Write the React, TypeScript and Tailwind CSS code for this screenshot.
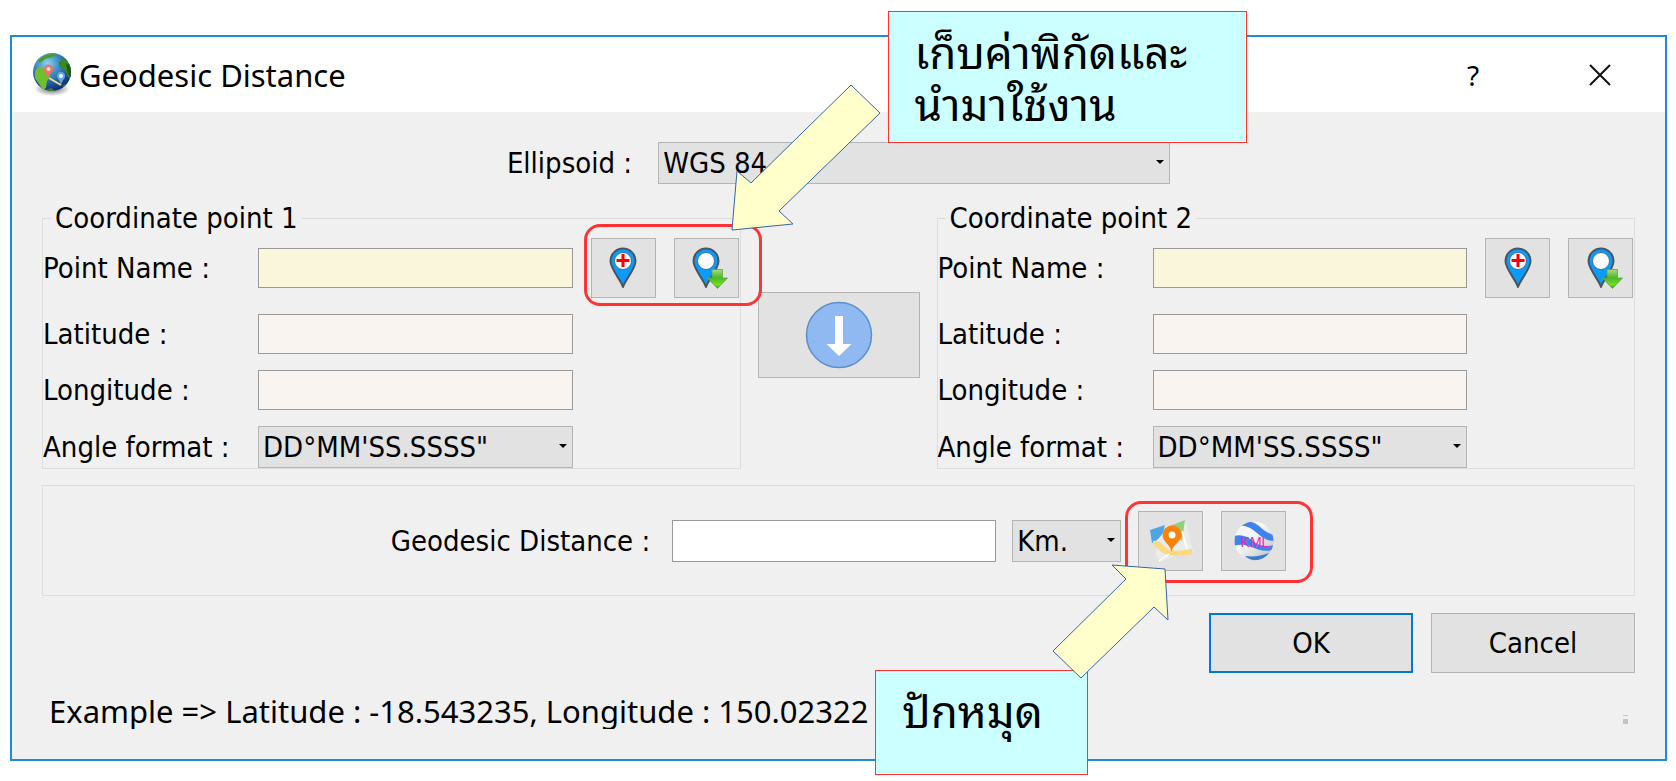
import type { ReactNode } from 'react'
import { clsx } from 'clsx'

const labelFont = 'font-["DejaVu_Sans_Condensed","Noto_Sans",sans-serif]'
const titleFont = 'font-["Noto_Sans","Open_Sans",sans-serif]'

function GlobeIcon() {
    return (
        <svg className="h-[46px] w-[42px]" viewBox="0 0 42 46" aria-hidden="true">
            <defs>
                <radialGradient id="sea" cx="0.38" cy="0.28" r="0.75">
                    <stop offset="0" stopColor="#8fd3ef" />
                    <stop offset="0.4" stopColor="#3f8fc4" />
                    <stop offset="1" stopColor="#0a2a72" />
                </radialGradient>
                <radialGradient id="shadow">
                    <stop offset="0" stopColor="#000" stopOpacity="0.6" />
                    <stop offset="1" stopColor="#000" stopOpacity="0" />
                </radialGradient>
                <clipPath id="globe">
                    <circle cx="21" cy="20" r="19" />
                </clipPath>
            </defs>
            <ellipse cx="21" cy="37" rx="18" ry="7" fill="url(#shadow)" />
            <circle cx="21" cy="20" r="19" fill="url(#sea)" />
            <g clipPath="url(#globe)">
                <path d="M4 20C6 14 10 14 13 16l5 3 1 5-3 5-1 7-3 2-4-6-4-6z" fill="#6fbf2e" />
                <path d="M7 9C13 2 20 1 26 3l-5 2-7 2-5 4z" fill="#4c9a2c" />
                <path d="M28 10l4-4 9 8v14l-4-3-3-7-6-4z" fill="#3a8a1c" />
                <path d="M35 11l6 4v13l-4-6z" fill="#1f5a14" />
                <path d="M15 38l5-2 4 3-6 1zM31 34l4-2-1 4z" fill="#3a8a1c" />
            </g>
            <path d="M18 26l12 7" stroke="#f1dc8a" strokeWidth="2" />
            <path d="M17 26c-1-4-4-5-4-9a4.500 4.500 0 0 1 9 0c0 4-4 5-5 9z" fill="#f0716c" />
            <circle cx="17.500" cy="17" r="2" fill="#fbdcd8" />
            <path d="M30 33c-1-5-4-6-4-9a4 4 0 0 1 8 0c0 3-3 4-4 9z" fill="#6aa5dc" />
            <circle cx="30" cy="24" r="2" fill="#e8f4ff" />
        </svg>
    )
}

function PinShape() {
    return (
        <>
            <path
                d="M14 40C12 33 1.500 22 1.500 14a12.500 12.500 0 0 1 25 0C26.500 22 16 33 14 40z"
                fill="#0a9bff"
                stroke="#4a5560"
                strokeWidth="2"
                strokeLinejoin="round"
            />
            <circle cx="14" cy="14" r="8.500" fill="#fff" stroke="#3d6f9c" strokeWidth="1" />
        </>
    )
}

function PinAddIcon() {
    return (
        <svg className="h-[42px] w-7" viewBox="0 0 28 42" aria-hidden="true">
            <PinShape />
            <path d="M14 7v13M7.500 13.500h13" stroke="#f00" strokeWidth="3" />
        </svg>
    )
}

function PinLoadIcon() {
    return (
        <svg className="h-[42px] w-7 overflow-visible" viewBox="0 0 28 42" aria-hidden="true">
            <defs>
                <linearGradient id="leaf" x1="0" y1="0" x2="0" y2="1">
                    <stop offset="0" stopColor="#a2dc80" />
                    <stop offset="0.45" stopColor="#4fb526" />
                    <stop offset="0.8" stopColor="#6fe02c" />
                    <stop offset="1" stopColor="#3f9a1c" />
                </linearGradient>
            </defs>
            <PinShape />
            <path d="M20 22.500h10.500V31h5L25.500 41.500 15.500 31H20z" fill="url(#leaf)" stroke="#5aa83a" strokeWidth="0.8" />
        </svg>
    )
}

function CopyDownIcon() {
    return (
        <svg className="h-[68px] w-[68px]" viewBox="0 0 68 68" aria-hidden="true">
            <circle cx="34" cy="34" r="32.500" fill="#8fb9f0" stroke="#5c8fc9" strokeWidth="1.500" />
            <path d="M30 15h8v28h8.500L34 55 21.500 43H30z" fill="#fff" />
        </svg>
    )
}

function MapIcon() {
    return (
        <svg className="h-11 w-11" viewBox="0 0 44 44" aria-hidden="true">
            <path d="M1 11l14-5 5 2 17-6 7 31-13 2-20 8-5-8 3-9-5-5z" fill="#e9eceb" />
            <path d="M1 11l15-5-2 8-6 8-5 2z" fill="#4ea6e6" />
            <path d="M21 7l15-6-3 21-9-9z" fill="#8fd07a" />
            <path d="M4 22c4-2 8 2 12 6 8 6 17 3 27 2v5c-12 2-22 3-29-1-5-3-6-7-10-7z" fill="#fbd97e" />
            <path d="M10 42l10-7M33 12l5 18M8 22l9-8" stroke="#fff" strokeWidth="1.500" />
            <path d="M22.500 33c-1-8-9-10-9-17a9.500 9.500 0 0 1 19 0c0 7-9 9-10 17z" fill="#f9820b" />
            <circle cx="23" cy="16" r="3.500" fill="#fff" />
        </svg>
    )
}

function KmlIcon() {
    return (
        <svg className="h-[42px] w-[42px]" viewBox="0 0 42 42" aria-hidden="true">
            <defs>
                <clipPath id="kml">
                    <circle cx="21" cy="21" r="19.500" />
                </clipPath>
                <linearGradient id="ball" x1="0" y1="0" x2="1" y2="1">
                    <stop offset="0.4" stopColor="#f7f7f7" />
                    <stop offset="1" stopColor="#bcbcbc" />
                </linearGradient>
            </defs>
            <circle cx="21" cy="21" r="19.500" fill="url(#ball)" />
            <g clipPath="url(#kml)" fill="#3f83ee">
                <path d="M6 6C12 0 20 1 26 6c6 5 9 8 16 9v6c-8 0-12-3-18-8S13 5 6 6z" />
                <path d="M0 16c9-2 14 0 20 5s13 6 22 4l-3 5c-7 2-13 0-18-2s-12-5-21-2z" />
                <path d="M12 36c9 1 16 0 24-3-5 8-16 10-24 3z" fill="#3a7ccd" />
            </g>
            <text x="22" y="27" textAnchor="middle" fill="#e62bb4" className='font-["Liberation_Sans",sans-serif] text-[14px]'>
                KML
            </text>
        </svg>
    )
}

type ButtonProps = { label: string; className?: string; children: ReactNode }

function ToolButton({ label, className, children }: ButtonProps) {
    return (
        <button
            type="button"
            aria-label={label}
            className={clsx('flex items-center justify-center border border-[#b4b4b4] bg-[#e2e2e2]', className)}
        >
            {children}
        </button>
    )
}

type SelectProps = { id: string; value: string; className?: string; label?: string }

function Select({ id, value, className, label }: SelectProps) {
    return (
        <div className={clsx('relative h-[42px]', className)}>
            <select
                id={id}
                aria-label={label}
                className="h-full w-full appearance-none border border-[#b4b4b4] bg-[#e2e2e2] pl-1 leading-9"
            >
                <option>{value}</option>
            </select>
            <svg className="pointer-events-none absolute top-[18px] right-1.5 h-1 w-2" viewBox="0 0 8 4" aria-hidden="true">
                <path d="M0 0h8L4 4z" />
            </svg>
        </div>
    )
}

const field = 'h-10 w-full min-w-0 border border-[#999] px-1 outline-none'

function PointGroup({ n, children }: { n: number; children?: ReactNode }) {
    return (
        <fieldset className="min-w-0 flex-1 border border-[#dcdcdc] pr-px">
            <legend className="ml-2 px-1 leading-10">Coordinate point {n}</legend>
            <div className="grid grid-cols-[197px_1fr_65px_65px] items-center gap-x-[18px] gap-y-4 whitespace-nowrap">
                <label htmlFor={`name-${n}`}>Point Name :</label>
                <input id={`name-${n}`} className={clsx(field, 'bg-[#f9f6dc]')} />
                <div className="relative col-span-2 flex gap-[18px]">
                    <ToolButton label="Save point" className="h-[60px] w-[65px]">
                        <PinAddIcon />
                    </ToolButton>
                    <ToolButton label="Load point" className="h-[60px] w-[65px]">
                        <PinLoadIcon />
                    </ToolButton>
                    {children}
                </div>

                <label htmlFor={`lat-${n}`}>Latitude :</label>
                <input id={`lat-${n}`} className={clsx(field, 'bg-[#f9f4ef]')} />
                <span className="col-span-2" />

                <label htmlFor={`lon-${n}`}>Longitude :</label>
                <input id={`lon-${n}`} className={clsx(field, 'bg-[#f9f4ef]')} />
                <span className="col-span-2" />

                <label htmlFor={`angle-${n}`}>Angle format :</label>
                <Select id={`angle-${n}`} value={'DD°MM\'SS.SSSS"'} />
            </div>
        </fieldset>
    )
}

const callout =
    'absolute z-10 border border-[#ff3333] bg-[#ccffff] pt-[11px] pl-[26px] whitespace-nowrap font-["Noto_Sans_Thai_Looped","Noto_Looped_Thai","Waree","Loma","Garuda","Umpush","Droid_Sans_Thai","Noto_Sans_Thai",sans-serif] text-[44px] leading-[52px]'
const highlight = 'pointer-events-none absolute z-10 rounded-2xl border-[3px] border-[#ff3333]'

function Arrow({ points }: { points: string }) {
    return (
        <svg className="pointer-events-none absolute top-0 left-0 z-20 h-px w-px overflow-visible" aria-hidden="true">
            <polygon points={points} fill="#ffffcc" stroke="#3465a4" strokeWidth="1" />
        </svg>
    )
}

export default function App() {
    return (
        <div className="min-h-screen overflow-x-hidden bg-white pt-[35px] pr-[9px] pb-5 pl-[10px]">
            <div className={clsx('border-2 border-[#1e8ad8] bg-[#f0f0f0] text-[29px] leading-9 text-black', labelFont)}>
                <header className={clsx('flex h-[75px] items-center bg-white pr-[50px] pl-[19px]', titleFont)}>
                    <GlobeIcon />
                    <h1 className="ml-1.5 text-[31px]">Geodesic Distance</h1>
                    <button type="button" aria-label="Help" className="ml-auto w-10 text-[28px]">
                        ?
                    </button>
                    <button type="button" aria-label="Close" className="ml-[92px] p-1">
                        <svg className="h-[22px] w-[22px]" viewBox="0 0 22 22" aria-hidden="true">
                            <path d="M1 1l20 20M21 1L1 21" stroke="#111" strokeWidth="2" />
                        </svg>
                    </button>
                </header>

                <main className="px-[30px] pt-[30px]">
                    <div className="flex items-center justify-center">
                        <label htmlFor="ellipsoid" className="pr-[26px]">
                            Ellipsoid :
                        </label>
                        <Select id="ellipsoid" value="WGS 84" className="w-[512px]" />
                    </div>

                    <div className="mt-3.5 flex gap-[17px]">
                        <PointGroup n={1}>
                            <div className={clsx(highlight, '-top-3.5 -left-[7px] h-[82px] w-[178px]')} />
                            <Arrow points="260,-153 289,-125 188,-27 202,-14 141,-8 146,-67 160,-55" />
                            <p className={clsx(callout, '-top-[227px] left-[297px] h-[132px] w-[359px]')}>
                                เก็บค่าพิกัดและ
                                <br />
                                นำมาใช้งาน
                            </p>
                        </PointGroup>
                        <ToolButton label="Copy point 1 to point 2" className="mt-[94px] h-[86px] w-[162px]">
                            <CopyDownIcon />
                        </ToolButton>
                        <PointGroup n={2} />
                    </div>

                    <section className="mt-4 flex h-[111px] items-center justify-center border border-[#dcdcdc]">
                        <label htmlFor="distance" className="pr-[22px]">
                            Geodesic Distance :
                        </label>
                        <input id="distance" className="h-[42px] w-[324px] border border-[#999] bg-white px-1 outline-none" />
                        <Select id="unit" label="Unit" value="Km." className="ml-4 w-[109px]" />
                        <div className="relative ml-[17px] flex gap-[18px]">
                            <ToolButton label="Show on map" className="h-[60px] w-[65px]">
                                <MapIcon />
                            </ToolButton>
                            <ToolButton label="Export KML" className="h-[60px] w-[65px]">
                                <KmlIcon />
                            </ToolButton>
                            <div className={clsx(highlight, '-top-[10px] -left-[13px] h-[82px] w-[188px]')} />
                            <p className={clsx(callout, 'top-[159px] -left-[263px] h-[105px] w-[213px]')}>ปักหมุด</p>
                            <Arrow points="-26,54 27,58 30,109 16,96 -57,167 -85,140 -12,68" />
                        </div>
                    </section>

                    <div className="mt-[17px] flex justify-end gap-[18px]">
                        <button type="button" className="h-[60px] w-[204px] border-2 border-[#0078d7] bg-[#e2e2e2]">
                            OK
                        </button>
                        <button type="button" className="h-[60px] w-[204px] border border-[#b4b4b4] bg-[#e2e2e2]">
                            Cancel
                        </button>
                    </div>
                </main>

                <footer className="flex h-[86px] items-start justify-between px-[37px] pt-4">
                    <p className={clsx('h-10 overflow-hidden text-[31px] leading-[44px]', titleFont)}>
                        Example =&gt; Latitude : -18.543235, Longitude : 150.02322
                    </p>
                    <svg className="mt-[26px] h-[9px] w-[5px]" viewBox="0 0 5 9" aria-hidden="true">
                        <path d="M0 0h5v1H0zM0 4h5v5H0z" fill="#c4c4c4" />
                    </svg>
                </footer>
            </div>
        </div>
    )
}
